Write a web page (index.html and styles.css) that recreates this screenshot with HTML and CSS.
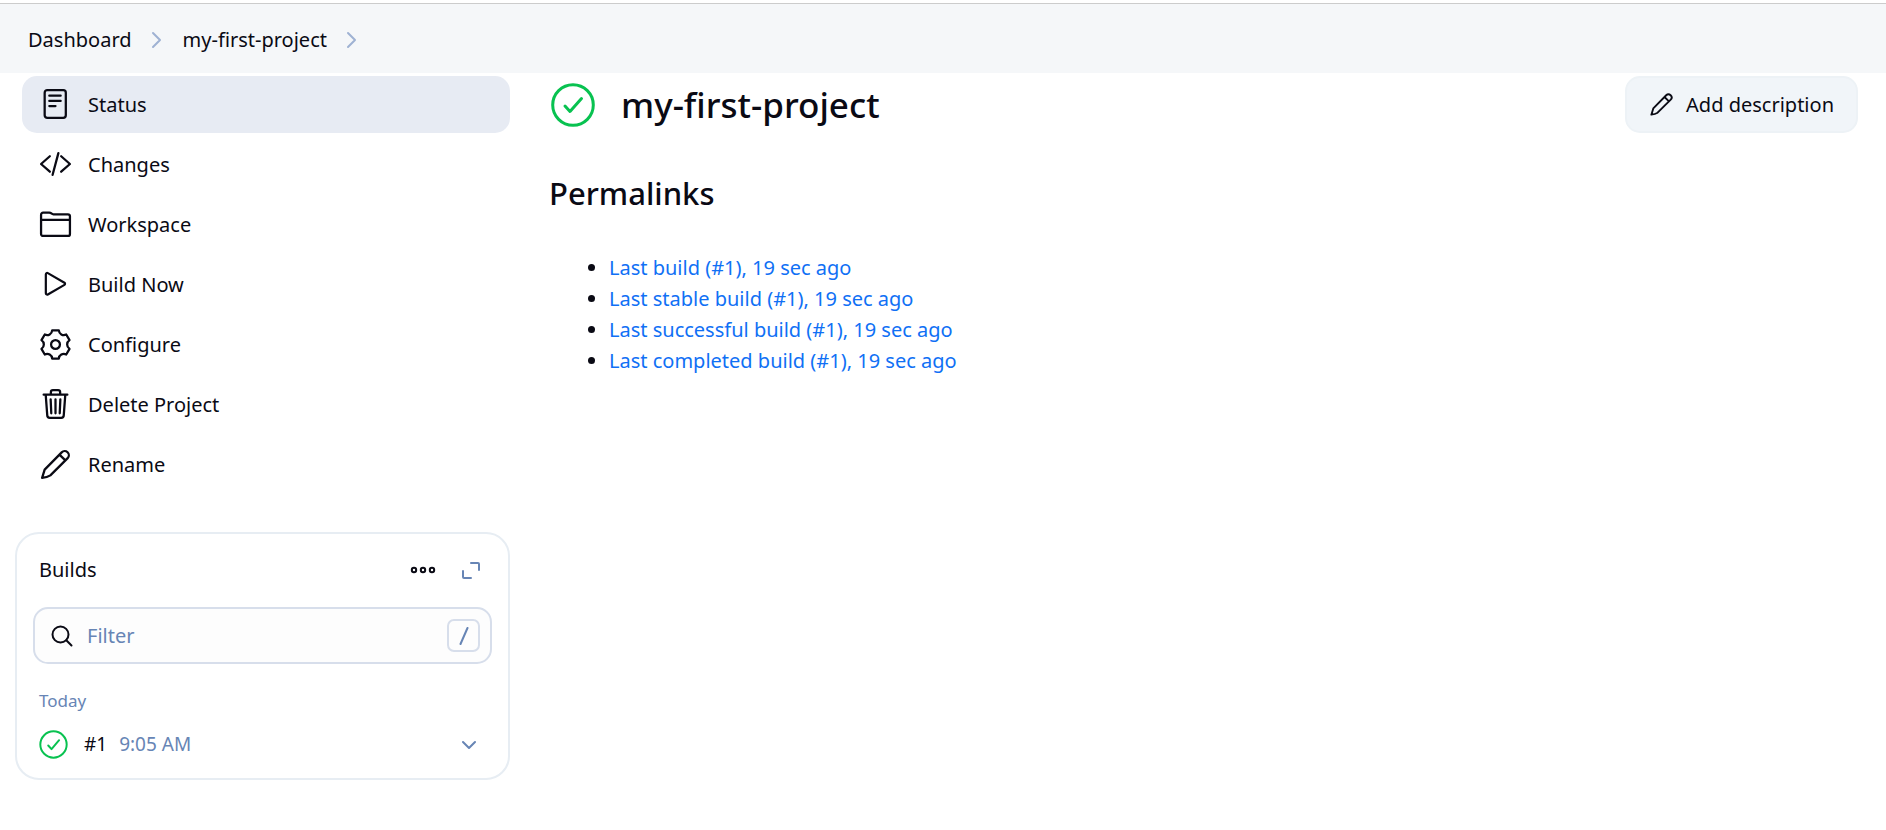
FILE: index.html
```html
<!DOCTYPE html>
<html lang="en">
<head>
<meta charset="utf-8">
<meta name="viewport" content="width=device-width, initial-scale=1">
<title>my-first-project</title>
<link rel="stylesheet" href="styles.css">
</head>
<body>
<svg class="sprite" aria-hidden="true">
  <symbol id="pencil" viewBox="0 0 32 32"><path d="M3 29L5.500 21 22 4.200a3.900 3.900 0 0 1 5.800 5.600L11 26.500Q8 28.500 3 29zM19.800 6.400l5.800 5.600"/></symbol>
  <symbol id="chevron" viewBox="0 0 16 20"><path d="M5 3l7 7-7 7"/></symbol>
</svg>
<header class="topbar">
  <nav aria-label="Breadcrumb">
    <ol class="crumbs">
      <li><a href="#">Dashboard</a><svg class="crumb-arrow" aria-hidden="true"><use href="#chevron"/></svg></li>
      <li><a href="#">my-first-project</a><svg class="crumb-arrow" aria-hidden="true"><use href="#chevron"/></svg></li>
    </ol>
  </nav>
</header>
<div class="page">
  <aside class="side">
    <nav class="tasks" aria-label="Project">
      <a class="task task-active" href="#" aria-current="page">
        <svg class="icon" viewBox="0 0 32 32" aria-hidden="true"><rect x="5.500" y="2" width="20.500" height="27" rx="2.500"/><path d="M10 7.500h11M10 12.500h11M10 17.500h6"/></svg>
        Status</a>
      <a class="task" href="#">
        <svg class="icon" viewBox="0 0 32 32" aria-hidden="true"><path d="M10.500 8L2 15.500 10.500 23M21.500 8l8.500 7.500L21.500 23M18.800 5l-5.600 21"/></svg>
        Changes</a>
      <a class="task" href="#">
        <svg class="icon" viewBox="0 0 32 32" aria-hidden="true"><path d="M2 11V6.500a2 2 0 0 1 2-2h6q1 0 2 .8t2 .8h14a2 2 0 0 1 2 2v17a2 2 0 0 1-2 2H4a2 2 0 0 1-2-2zM2 11.500h28"/></svg>
        Workspace</a>
      <a class="task" href="#">
        <svg class="icon" viewBox="0 0 512 512" aria-hidden="true"><path class="thick" d="M106 100v290c0 17.440 17 28.520 31 20.160l258-148.370c12-7.250 12-26.330 0-33.580L137 79.840c-14-8.360-31 2.720-31 20.160z"/></svg>
        Build Now</a>
      <a class="task" href="#">
        <svg class="icon" viewBox="-16 -16 32 32" aria-hidden="true"><path d="M-3.200-13.800H3.200Q3.400-11.100 5.650-9.800T10.400-9.700L13.600-4.200Q11.300-2.600 11.300 0T13.600 4.200L10.400 9.700Q7.900 8.500 5.650 9.800T3.200 13.800H-3.200Q-3.400 11.100-5.650 9.800T-10.400 9.700L-13.600 4.200Q-11.300 2.600-11.300 0T-13.600-4.200L-10.400-9.700Q-7.900-8.500-5.650-9.800T-3.200-13.800z"/><circle r="4.300"/></svg>
        Configure</a>
      <a class="task" href="#">
        <svg class="icon" viewBox="0 0 32 32" aria-hidden="true"><path d="M4.500 6.500h23M11.500 6V4a2 2 0 0 1 2-2h5a2 2 0 0 1 2 2v2M6.500 6.500l1.500 20a2.500 2.500 0 0 0 2.500 2.500h11a2.500 2.500 0 0 0 2.500-2.500l1.500-20M11.300 11l.6 13.500M16 11v13.500M20.700 11l-.6 13.500"/></svg>
        Delete Project</a>
      <a class="task" href="#">
        <svg class="icon" aria-hidden="true"><use href="#pencil"/></svg>
        Rename</a>
    </nav>
    <section class="card">
      <div class="card-head">
        <h2 class="card-title">Builds</h2>
        <button class="tool" type="button" aria-label="More actions"><svg class="dots" viewBox="0 0 26 10" aria-hidden="true"><circle cx="4" cy="5" r="2.200"/><circle cx="13" cy="5" r="2.200"/><circle cx="22" cy="5" r="2.200"/></svg></button>
        <button class="tool tool-muted" type="button" aria-label="Expand"><svg class="expand" viewBox="0 0 18 18" aria-hidden="true"><path d="M9 2H16a1 1 0 0 1 1 1V9M1 10v6a1 1 0 0 0 1 1h7"/></svg></button>
      </div>
      <label class="search">
        <svg class="lens" viewBox="0 0 22 22" aria-hidden="true"><circle cx="9.500" cy="9.500" r="8"/><path d="M15.300 15.300l5.200 5.200"/></svg>
        <input class="search-input" type="search" placeholder="Filter" aria-label="Filter builds">
        <span class="key"><svg class="slash" viewBox="0 0 10 18" aria-hidden="true"><path d="M8.500 1l-7 16"/></svg></span>
      </label>
      <h3 class="day">Today</h3>
      <div class="build">
        <svg class="ok" viewBox="0 0 44 44" role="img" aria-label="Success"><circle cx="22" cy="22" r="20"/><path d="M14 23.500l5 5.500L30.500 15.500"/></svg>
        <a class="build-link" href="#">#1</a>
        <span class="build-time">9:05 AM</span>
        <button class="tool tool-muted build-menu" type="button" aria-label="Build actions"><svg class="down" viewBox="0 0 14 10" aria-hidden="true"><path d="M1 2l6 6 6-6"/></svg></button>
      </div>
    </section>
  </aside>
  <main class="main">
    <div class="title-row">
      <svg class="ok ok-large" viewBox="0 0 44 44" role="img" aria-label="Success"><circle cx="22" cy="22" r="20.300"/><path d="M14 23l5 5.500L30.500 15.500"/></svg>
      <h1 class="title">my-first-project</h1>
      <button class="describe" type="button"><svg class="describe-icon" aria-hidden="true"><use href="#pencil"/></svg>Add description</button>
    </div>
    <h2 class="subtitle">Permalinks</h2>
    <ul class="links">
      <li><a href="#">Last build (#1), 19 sec ago</a></li>
      <li><a href="#">Last stable build (#1), 19 sec ago</a></li>
      <li><a href="#">Last successful build (#1), 19 sec ago</a></li>
      <li><a href="#">Last completed build (#1), 19 sec ago</a></li>
    </ul>
  </main>
</div>
</body>
</html>
```
FILE: styles.css
```css
* { box-sizing: border-box; }

body {
  margin: 0;
  padding-top: 3px;
  background: #fff;
  color: #0a0a14;
  font: 20px/31px "Noto Sans", "Open Sans", sans-serif;
}

a { color: inherit; text-decoration: none; }
button { font: inherit; color: inherit; cursor: pointer; }
svg { flex: none; fill: none; stroke: currentColor; stroke-width: 2; stroke-linecap: round; stroke-linejoin: round; }
.sprite { position: absolute; width: 0; height: 0; }
.thick { stroke-width: 34; }

.topbar { padding: 20px 28px 18px; border-top: 1px solid #ccc; background: #f5f7f9; }
.crumbs { display: flex; margin: 0; padding: 0; list-style: none; }
.crumbs li { display: flex; align-items: center; }
.crumb-arrow { width: 16px; height: 20px; margin: 0 19px 0 16px; color: #9fb2d3; }

.page {
  display: grid;
  grid-template-columns: minmax(300px, 495px) 1fr;
  gap: 39px;
  padding: 3px 28px 28px 15px;
}

.tasks { display: flex; flex-direction: column; gap: 3px; margin-left: 7px; }
.task { display: flex; align-items: center; gap: 16px; height: 57px; padding: 0 17px; border-radius: 15px; }
.task-active { background: #e7ebf3; }
.icon { width: 33px; height: 33px; stroke-width: 2.2; }

.card { margin-top: 39px; padding: 14px 16px; border: 2px solid #e7edf3; border-radius: 24px; }
.card-head { display: flex; align-items: center; gap: 26px; padding: 6px 12px 0 6px; }
.card-title { flex: 1; margin: 0; font-size: 20px; font-weight: 400; }
.tool { display: flex; padding: 0; border: 0; background: none; }
.tool-muted { color: #6785b5; }
.dots { width: 26px; height: 10px; }
.expand { width: 18px; height: 18px; }

.search {
  display: flex;
  align-items: center;
  gap: 14px;
  height: 57px;
  margin-top: 22px;
  padding: 0 10px 0 16px;
  border: 2px solid #d7deeb;
  border-radius: 15px;
  background: #fdfdfd;
}
.lens { width: 22px; height: 22px; }
.search-input { flex: 1; min-width: 0; padding: 0; border: 0; outline: 0; background: none; color: inherit; font: inherit; }
.search-input::placeholder { color: #6785b5; opacity: 1; }
.key { display: flex; align-items: center; justify-content: center; width: 33px; height: 33px; border: 2px solid #d7deeb; border-radius: 7px; color: #6785b5; }
.slash { width: 10px; height: 18px; }

.day { margin: 21px 6px 0; color: #6785b5; font-size: 17px; font-weight: 400; }
.build { display: flex; align-items: center; padding: 13px 16px 4px 6px; }
.ok { width: 29px; height: 29px; color: #08c250; stroke-width: 3; }
.build-link { margin: 0 12px 0 16px; font-size: 19px; }
.build-time { flex: 1; color: #6785b5; font-size: 19px; }
.down { width: 14px; height: 10px; }

.title-row { display: flex; align-items: center; height: 57px; padding-left: 2px; }
.ok-large { width: 44px; height: 44px; }
.title { flex: 1; margin: 0 0 0 26px; font-size: 35px; line-height: 44px; font-weight: 500; }
.describe {
  display: flex;
  align-items: center;
  gap: 12px;
  height: 57px;
  padding: 0 22px;
  border: 2px solid #edf2f6;
  border-radius: 15px;
  background: #f1f5f9;
}
.describe-icon { width: 25px; height: 25px; stroke-width: 2.4; }
.subtitle { margin: 38px 0 0; font-size: 31px; line-height: 44px; font-weight: 500; }
.links { margin: 37px 0 0; padding-left: 60px; }
.links a { color: #1070f5; }
```
